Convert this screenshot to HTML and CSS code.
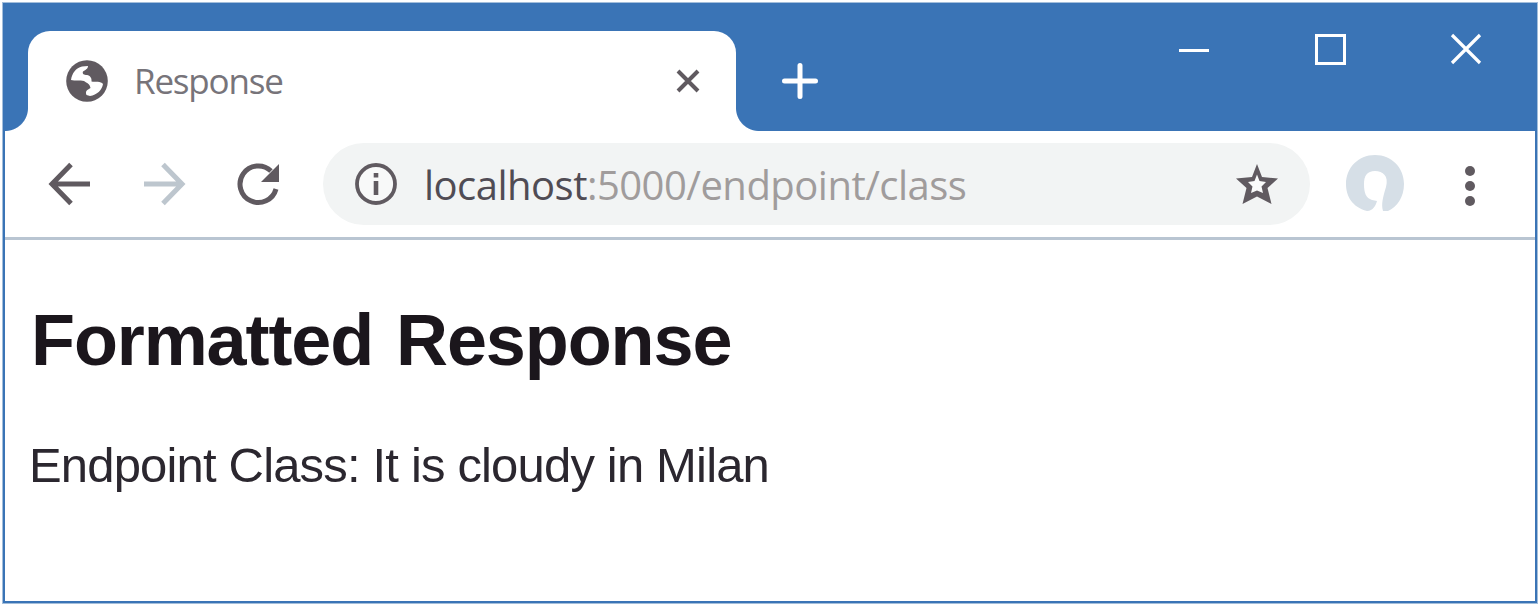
FILE: index.html
```html
<!DOCTYPE html>
<html lang="en">
<head>
<meta charset="utf-8">
<title>Response</title>
<link rel="stylesheet" href="styles.css">
</head>
<body>
<div class="window">
  <div class="frame">
    <header class="tabstrip">
      <div class="tab">
        <svg class="globe" viewBox="0 0 42 42"><circle cx="21" cy="21" r="20.800" fill="#605a60"/><path d="M5 20C6 13 10 8 16 6.500L22 6C22 9 19 10 17 11.500C16 14 18 15 21 15C24 15.500 26 18 25.500 21.500C29 22 35 21 37 24C36 30 31 35 24 36L20.500 35C19 31 21 30 24.500 28C24 24 21 23 18 21C14 20 9 21 5 20Z" fill="#fff"/></svg>
        <span class="tab-title">Response</span>
        <svg class="tab-close" viewBox="0 0 24 24"><path d="M2 2L22 22M22 2L2 22" stroke="#605a60" stroke-width="4"/></svg>
      </div>
      <svg class="new-tab" viewBox="0 0 36 36"><path d="M18 2.500V33.500M2.500 18H33.500" stroke="#fff" stroke-width="5" stroke-linecap="round"/></svg>
      <div class="controls">
        <svg viewBox="0 0 32 32"><path d="M1 17.500H31" stroke="#fff" stroke-width="3"/></svg>
        <svg viewBox="0 0 32 32"><rect x="2.500" y="2.500" width="28" height="28" fill="none" stroke="#fff" stroke-width="3"/></svg>
        <svg viewBox="0 0 32 32"><path d="M2 2L30 30M30 2L2 30" stroke="#fff" stroke-width="3.200"/></svg>
      </div>
    </header>
    <nav class="toolbar">
      <svg class="back" viewBox="0 0 42 42"><path d="M22 1.500L3 21L22 40.500M3 21H41" fill="none" stroke="#605a60" stroke-width="5"/></svg>
      <svg class="forward" viewBox="0 0 42 42"><path d="M20 1.500L39 21L20 40.500M39 21H1" fill="none" stroke="#bdc6ce" stroke-width="5"/></svg>
      <svg class="reload" viewBox="0 0 42 42"><path d="M39 26A18.300 18.300 0 1 1 34 8" fill="none" stroke="#605a60" stroke-width="5"/><path d="M42 1V19H24Z" fill="#605a60"/></svg>
      <div class="address">
        <svg class="info" viewBox="0 0 42 42"><circle cx="21" cy="21" r="19" fill="#f8f9f9" stroke="#605a60" stroke-width="3.800"/><path d="M21 10V14.500M21 18V32" stroke="#605a60" stroke-width="4.600"/></svg>
        <span class="url"><span class="host">localhost</span>:5000/endpoint/class</span>
        <svg class="star" viewBox="0 0 44 44"><path d="M22 2L27 15L43 16.500L32.500 26L36.500 42L22 34.500L7.500 42L11.500 26L1 16.500L17 15Z" fill="#605a60"/><path d="M22 12.500L24.500 19L31 20L26.500 24.500L28 31L22 28.500L16 31L17.500 24.500L13 20L19.500 19Z" fill="#fafbfb"/></svg>
      </div>
      <svg class="avatar" viewBox="0 0 60 60"><path d="M22 57C7 53 1 42 1 30C1 14 13 1 30 1C47 1 59 14 59 30C59 43 52 53 43 57L38 57C36 50 38 43 41 33C44 22 38 17 30 17C22 17 19 22 19 30C19 39 21 44 27 46L32 47C31 51 28 57 22 57Z" fill="#d6dfe7"/></svg>
      <svg class="menu" viewBox="0 0 12 42"><g fill="#605a60"><circle cx="6" cy="6" r="5"/><circle cx="6" cy="21" r="5"/><circle cx="6" cy="36" r="5"/></g></svg>
    </nav>
    <main class="page">
      <h1>Formatted Response</h1>
      <p>Endpoint Class: It is cloudy in Milan</p>
    </main>
  </div>
</div>
</body>
</html>
```
FILE: styles.css
```css
* { box-sizing: border-box; }
body { margin: 0; padding: 2px 1px 1px 2px; background: #fff; overflow: hidden; }
svg { display: block; flex: none; overflow: visible; }
.window { height: 602px; border: 1px solid #a3bedb; }
.frame { height: 600px; border: 2px solid #3a74b6; background: #fff; }
.tabstrip { height: 126px; background: #3a74b6; display: flex; align-items: flex-end; }
.tab { position: relative; width: 708px; height: 100px; margin-left: 23px; padding: 0 36px 0 38px; background: #fff; border-radius: 22px 22px 0 0; display: flex; align-items: center; }
.tab::before, .tab::after { content: ""; position: absolute; bottom: 0; width: 23px; height: 23px; }
.tab::before { right: 100%; background: radial-gradient(circle at 0 0, transparent 22.5px, #fff 23.5px); }
.tab::after { left: 100%; background: radial-gradient(circle at 100% 0, transparent 22.5px, #fff 23.5px); }
.globe { width: 42px; height: 42px; }
.tab-title { margin-left: 26px; font: 35px/48px "Open Sans", "Noto Sans", sans-serif; letter-spacing: -1.2px; color: #77747a; white-space: nowrap; }
.tab-close { width: 24px; height: 24px; margin-left: auto; }
.new-tab { width: 36px; height: 36px; margin: 0 0 32px 46px; }
.controls { display: flex; gap: 104px; margin: 0 53px 66px auto; }
.controls svg { width: 32px; height: 32px; }
.toolbar { height: 109px; padding: 0 59px 0 44px; border-bottom: 3px solid #b9c5d2; display: flex; align-items: center; }
.back, .forward, .reload { width: 42px; height: 42px; }
.forward, .reload { margin-left: 52px; }
.address { width: 987px; height: 82px; margin-left: 44px; padding: 0 31px 0 32px; border-radius: 41px; background: #f2f4f4; display: flex; align-items: center; }
.info { width: 42px; height: 42px; }
.url { margin-left: 27px; padding-top: 2px; font: 40px/54px "Open Sans", "Noto Sans", sans-serif; letter-spacing: -0.52px; color: #a09c9c; white-space: nowrap; }
.host { color: #504c54; }
.star { width: 44px; height: 44px; margin-left: auto; }
.avatar { width: 60px; height: 60px; margin-left: 35px; }
.menu { width: 12px; height: 42px; margin: 4px 0 0 auto; }
.page { padding: 59px 0 0 24px; font-family: "Liberation Sans", Arial, sans-serif; color: #1b161c; }
h1 { margin: 0; padding-left: 2px; font-size: 72px; line-height: 82px; letter-spacing: -1.1px; word-spacing: 4px; }
p { margin: 56px 0 0; font-size: 49px; line-height: 56px; letter-spacing: -0.83px; color: #2b272f; }
```
